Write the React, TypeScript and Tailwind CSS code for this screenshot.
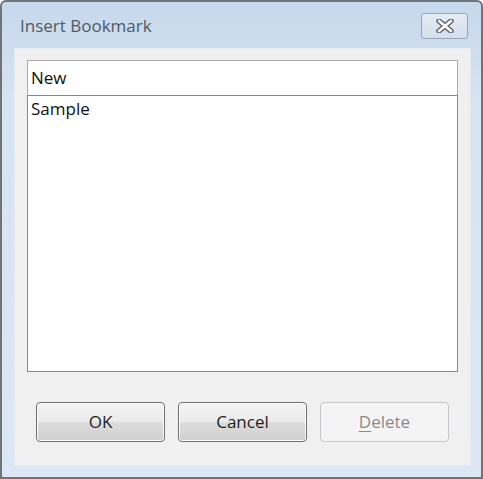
import React from "react";

const font = { fontFamily: '"Open Sans", "Noto Sans", sans-serif' };

const Btn = ({ label, disabled }: { label: React.ReactNode; disabled?: boolean }) => (
    <button
        className={
            disabled
                ? "w-[129px] h-[40px] rounded-[4px] border border-[#c4c8cc] bg-[#f4f4f4] text-[#8a8a8a] text-[17px]"
                : "w-[129px] h-[40px] rounded-[4px] border border-[#707070] bg-[linear-gradient(#f3f3f3_0%,#ebebeb_48%,#dddddd_52%,#cfcfcf_100%)] text-[#1e1e1e] text-[17px] shadow-[inset_0_0_0_1px_#fcfcfc]"
        }
    >
        {label}
    </button>
);

const CloseIcon = () => (
    <svg width="22" height="14" viewBox="0 0 22 14">
        <path d="M5 2 L17 12 M17 2 L5 12" stroke="#5f6369" strokeWidth="5.4" strokeLinecap="round" />
        <path d="M5 2 L17 12 M17 2 L5 12" stroke="#ffffff" strokeWidth="2.6" strokeLinecap="round" />
    </svg>
);

export default function App() {
    return (
        <div
            style={font}
            className="w-[483px] h-[479px] flex flex-col rounded-t-[6px] border-2 border-[#6f7478] bg-[linear-gradient(#c6d8ec_0%,#d6e3f1_20%,#dce7f3_100%)]"
        >
            <div className="h-[46px] flex items-center justify-between pl-[18px] pr-[13px] shrink-0">
                <span className="text-[17px] text-[#4f5a66] pt-[2px]">Insert Bookmark</span>
                <div className="w-[47px] h-[26px] mt-[2px] rounded-[3px] border border-[#9aa5b2] bg-[linear-gradient(#e4ecf5,#d3dfec)] flex items-center justify-center">
                    <CloseIcon />
                </div>
            </div>
            <div className="flex-1 ml-[12px] mr-[10px] mb-[11px] bg-[#f0f0f0] border border-[#e3ebf4] flex flex-col px-[12px] pt-[11px]">
                <div className="h-[35px] border border-[#abadb3] border-b-0 bg-white flex items-center px-[3px] text-[17px] text-[#111]">
                    New
                </div>
                <div className="h-[277px] border border-[#828790] bg-white px-[3px] text-[17px] text-[#111] leading-[26px]">
                    Sample
                </div>
                <div className="flex gap-[13px] mt-[30px] ml-[9px]">
                    <Btn label="OK" />
                    <Btn label="Cancel" />
                    <Btn
                        disabled
                        label={
                            <span>
                                <span className="underline underline-offset-[3px]">D</span>elete
                            </span>
                        }
                    />
                </div>
            </div>
        </div>
    );
}
